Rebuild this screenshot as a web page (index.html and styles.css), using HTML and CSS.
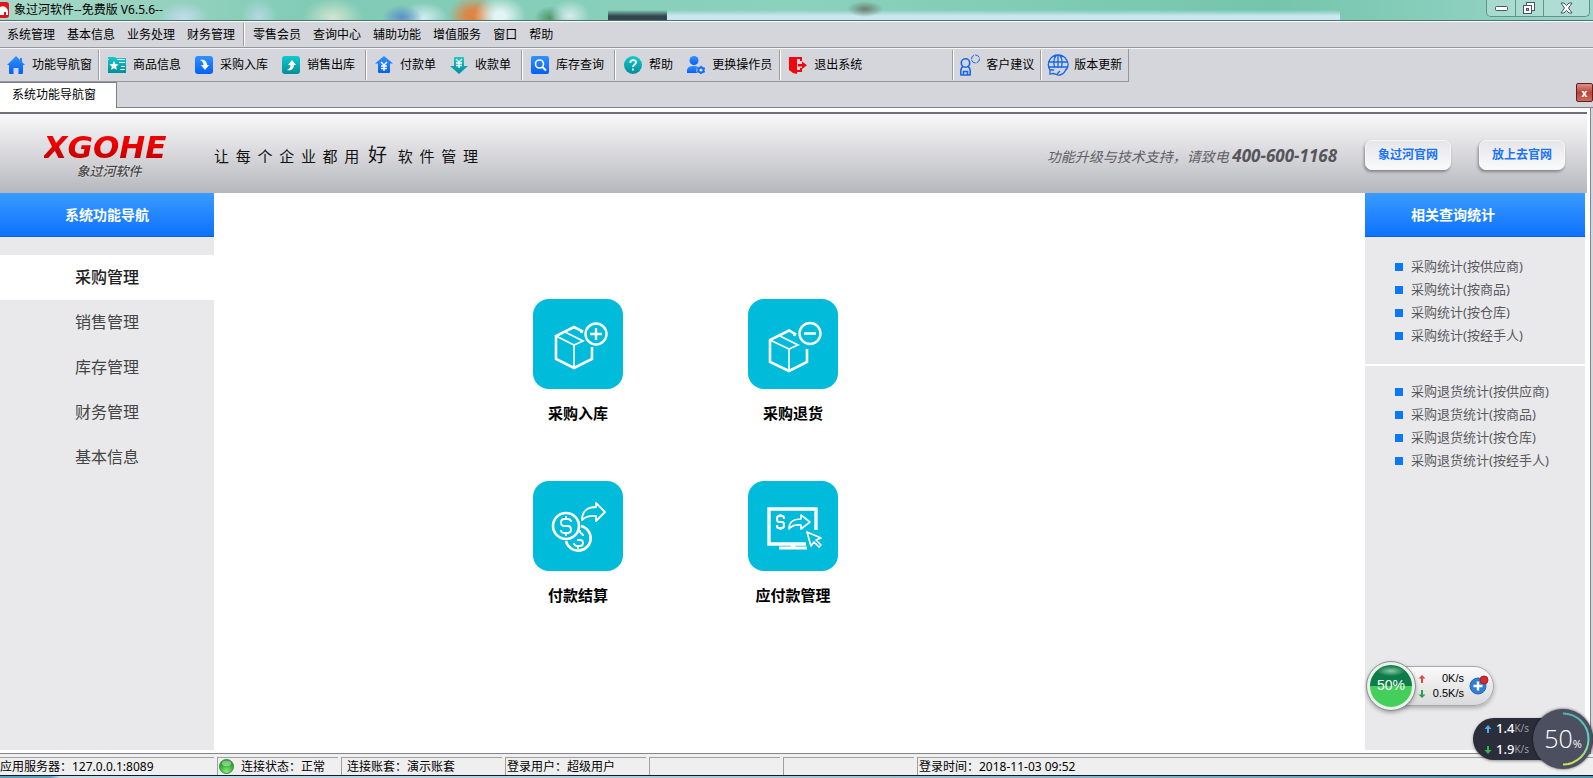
FILE: index.html
```html
<!DOCTYPE html>
<html lang="zh-CN">
<head>
<meta charset="utf-8">
<title>象过河软件--免费版 V6.5.6--</title>
<link rel="stylesheet" href="styles.css">
</head>
<body>
<svg class="defs" aria-hidden="true">
  <defs>
    <linearGradient id="blue" x1="0" y1="0" x2="0" y2="1"><stop offset="0" stop-color="#3291ff"/><stop offset="1" stop-color="#0560f5"/></linearGradient>
    <linearGradient id="teal" x1="0" y1="0" x2="0" y2="1"><stop offset="0" stop-color="#12c9cd"/><stop offset="1" stop-color="#028e98"/></linearGradient>
    <linearGradient id="arc" x1="0" y1="0" x2="0" y2="1"><stop offset="0" stop-color="#4cb5b0"/><stop offset=".5" stop-color="#62d8c0"/><stop offset="1" stop-color="#d8e055"/></linearGradient>
    <radialGradient id="ball" cx=".5" cy=".85" r=".8"><stop offset="0" stop-color="#8be878"/><stop offset=".6" stop-color="#35b535"/><stop offset="1" stop-color="#1e8a2a"/></radialGradient>
  </defs>
</svg>

<header class="titlebar">
  <svg class="app-icon" viewBox="0 0 9 16"><path d="M0 0h6q3 0 3 3v10q0 3-3 3H0z" fill="#e5121a"/><path d="M0 5c4-2 8 1 8 5v3H6v-3H4v3H0z" fill="#fff"/></svg>
  <h1 class="title">象过河软件--免费版 V6.5.6--</h1>
  <div class="window-buttons">
    <button class="win" aria-label="最小化"><svg width="13" height="5"><rect x=".5" y=".5" width="12" height="4" rx="1" fill="#fff" stroke="#4d5560"/></svg></button>
    <button class="win" aria-label="还原"><svg width="13" height="13"><rect x="3.500" y=".5" width="8" height="8" fill="#fff" stroke="#4d5560"/><rect x=".5" y="3.500" width="8" height="8" fill="#fff" stroke="#4d5560"/><rect x="3.500" y="6.500" width="2" height="2" fill="#9bd" stroke="#4d5560"/></svg></button>
    <button class="win win-close" aria-label="关闭"><svg width="13" height="12"><path d="M1 1h3l2.500 2.600L9 1h3L8.500 6l3.500 5H9L6.500 8.400 4 11H1l3.500-5z" fill="#fff" stroke="#4d5560"/></svg></button>
  </div>
</header>

<nav class="menubar">
  <div class="menu-group">
    <button>系统管理</button><button>基本信息</button><button>业务处理</button><button>财务管理</button>
  </div>
  <div class="menu-group">
    <button>零售会员</button><button>查询中心</button><button>辅助功能</button><button>增值服务</button><button>窗口</button><button>帮助</button>
  </div>
</nav>

<div class="toolbar-row">
<div class="toolbar">
  <div class="tools tools-home">
    <button><svg viewBox="0 0 18 18"><path d="M9 0L0 9h2v8q0 1 1 1h3.500v-6h5v6H15q1 0 1-1V9h2l-3-3V2h-2v2z" fill="url(#blue)"/></svg>功能导航窗</button>
  </div>
  <div class="tools">
    <button><svg viewBox="0 0 18 18"><path d="M0 1h7l1 1h10v15H0z" fill="url(#teal)"/><path d="M6 5l1.400 3 3.100.4-2.300 2.100.7 3.200L6 12.200l-2.900 1.500.7-3.200-2.300-2.100 3.100-.4zM11 6h6v1h-6zM13 10h4v1h-4zM12 13h5v1h-5zM0 3h1v1H0zM9 3h8v1H9z" fill="#fff"/></svg>商品信息</button>
    <button><svg viewBox="0 0 18 18"><rect width="18" height="18" rx="3" fill="url(#blue)"/><path d="M5 4c4-1 7 1 7 5h2l-4 5-4-5h2.500c0-2-1-4-3.500-5z" fill="#fff"/></svg>采购入库</button>
    <button><svg viewBox="0 0 18 18"><rect width="18" height="18" rx="3" fill="url(#teal)"/><path d="M5 14c4 1 7-1 7-5h2l-4-5-4 5h2.500c0 2-1 4-3.500 5z" fill="#fff"/></svg>销售出库</button>
  </div>
  <div class="tools">
    <button><svg viewBox="0 0 18 18"><path d="M9 0l9 7.500h-3V16q0 1-1 1H4q-1 0-1-1V7.500H0z" fill="url(#blue)"/><path d="M6 6l3 3 3-3M9 9v6M6 10h6M6 12.500h6" fill="none" stroke="#fff" stroke-width="1.400"/></svg>付款单</button>
    <button><svg viewBox="0 0 18 18"><path d="M9 18l9-8h-4V2q0-1-1-1H5Q4 1 4 2v8H0z" fill="url(#teal)"/><path d="M6 3l3 3 3-3M9 6v6M6 7h6M6 9.500h6" fill="none" stroke="#fff" stroke-width="1.400"/></svg>收款单</button>
  </div>
  <div class="tools">
    <button><svg viewBox="0 0 18 18"><rect width="18" height="18" rx="2" fill="url(#blue)"/><circle cx="8.500" cy="8" r="4" fill="none" stroke="#fff" stroke-width="1.600"/><path d="M11.500 11l3.500 3.500" stroke="#fff" stroke-width="2"/></svg>库存查询</button>
  </div>
  <div class="tools tools-user">
    <button><svg viewBox="0 0 18 18"><circle cx="9" cy="9" r="9" fill="url(#teal)"/><path d="M6.300 7c0-4 5.700-3.500 5.700-.5C12 8.500 9 8.500 9 11M9 12.500v2" fill="none" stroke="#fff" stroke-width="1.800"/></svg>帮助</button>
    <button><svg viewBox="0 0 18 18"><circle cx="7" cy="4.500" r="4.500" fill="url(#blue)"/><path d="M0 17v-2c0-4 3-5 7-5 2 0 3 .3 4 1-2 1-2 4-1 6z" fill="url(#blue)"/><circle cx="14" cy="14" r="2.600" fill="#d5e4fa" stroke="#126cf7" stroke-width="2"/><path d="M14 9.800v1M14 17v1M10.200 12l1 .5M17 15.500l.8.500M10.200 16l1-.5M17 12.500l.8-.5" stroke="#126cf7" stroke-width="1.500"/></svg>更换操作员</button>
  </div>
  <div class="tools tools-exit">
    <button><svg viewBox="0 0 18 18"><path d="M0 1h13v4h-2V3H8v11h3v-2h2v4H8v2l-4-1-4-3z" fill="#f5060c"/><path d="M9 8h4V5.500l5 3.700-5 3.700v-2.400H9z" fill="#f5060c"/></svg>退出系统</button>
  </div>
  <div class="tools tools-wide">
    <button><svg viewBox="0 0 22 22"><g fill="none" stroke="#1766e8" stroke-width="1.600"><circle cx="6.500" cy="9" r="4.200"/><path d="M4 12.500C1.500 14 1.500 18 2 21h9c.5-3 .5-7-2-8.500M4.500 21v-3.500h4V21"/></g><circle cx="16.500" cy="5" r="4" fill="none" stroke="#1766e8" stroke-dasharray="5 1"/></svg>客户建议</button>
  </div>
  <div class="tools tools-wide">
    <button><svg viewBox="0 0 22 22"><g fill="none" stroke="#1766e8" stroke-width="1.300"><path d="M3 16C-1 10 3 1 11 1s13 9 8 15M1 8h20M1 13h20M8 14C6 9 7 4 9.500 1M14 14c2-5 1-10-1.500-13M11 1v13M3 21v-5h4M4 20c3-2 5 2 9 1s5-3 6-6M13 17l-3 3"/></g></svg>版本更新</button>
  </div>
</div>
</div>

<div class="tabs" role="tablist">
  <button class="tab" role="tab" aria-selected="true">系统功能导航窗</button>
  <button class="tab-close" aria-label="关闭标签">x</button>
</div>

<div class="frame">
  <section class="banner">
    <div class="logo">
      <strong class="logo-name">XGOHE</strong>
      <span class="logo-sub">象过河软件</span>
    </div>
    <p class="slogan">让  每  个  企  业  都  用  <big>好</big>  软  件  管  理</p>
    <p class="support">功能升级与技术支持，请致电 <b>400-600-1168</b></p>
    <a class="site" href="#">象过河官网</a>
    <a class="site" href="#">放上去官网</a>
  </section>

  <div class="workspace">
    <nav class="side">
      <h2 class="panel-title">系统功能导航</h2>
      <a class="side-link active" href="#">采购管理</a>
      <a class="side-link" href="#">销售管理</a>
      <a class="side-link" href="#">库存管理</a>
      <a class="side-link" href="#">财务管理</a>
      <a class="side-link" href="#">基本信息</a>
    </nav>

    <main class="tiles">
      <a class="tile" href="#">
        <svg viewBox="0 0 90 90" fill="none" stroke="#fff"><path d="M48 34l1-2-8-4-18 9v23l18 9 18-9V48" stroke-width="2.600"/><path d="M23 37l18 9 9-4-18-9M41 46v22" stroke-width="1.700"/><circle cx="63" cy="35" r="10.500" stroke-width="2.400"/><path d="M57 35h12M63 29v12" stroke-width="2.400"/></svg>
        采购入库</a>
      <a class="tile" href="#">
        <svg viewBox="0 0 90 90" fill="none" stroke="#fff"><path d="M46 37l1-2-6-3.500L22 41v22l19 9 18-9V50" stroke-width="2.600"/><path d="M22 41l19 9 9-4-18-9M41 50v22" stroke-width="1.700"/><circle cx="62" cy="34.500" r="10.500" stroke-width="2.400"/><path d="M56 34.500h12" stroke-width="2.400"/></svg>
        采购退货</a>
      <a class="tile" href="#">
        <svg viewBox="0 0 90 90" fill="none" stroke="#fff"><circle cx="33" cy="45" r="13" stroke-width="2.600"/><path d="M48 45a12.500 12.500 0 1 1-15 15" stroke-width="2.600"/><path d="M38 41v-1q-1-2-3-2h-4q-3 0-3 3.500t3 3.500h4q3 0 3 3.500t-3 3.500h-4q-2 0-3-2v-1M33 35v3M33 52v3M50 55v-1q-1-2-3-2M41 62v1q1 2 3 2h3q3 0 3-3t-3-3h-3M45 65v3M47 49v3" stroke-width="1.800"/><path d="M49 39c0-8 5-13 14-13v-4l9 9-9 9v-5c-6-.5-10 0-14 4z" stroke-width="1.800" stroke-linejoin="round"/></svg>
        付款结算</a>
      <a class="tile" href="#">
        <svg viewBox="0 0 90 90" fill="none" stroke="#fff"><path d="M68 49V28H21v35h37" stroke-width="3.400"/><path d="M31 67h28" stroke-width="3"/><path d="M45 63v4" stroke-width="5"/><path d="M36 38v-1q0-2-2-2h-3q-2 0-2 3t2 3h3q2 0 2 3t-2 3h-3q-2 0-2-2v-1M32.500 33v2M32.500 47v2" stroke-width="2.200"/><path d="M41 48c0-7 5-10 12-10v-4l9 7-9 7v-4c-5-.5-9 0-12 4z" stroke-width="1.600" stroke-linejoin="round"/><path d="M59 51l4 14 3-4 5 5 2-2-5-5 5-2z" stroke-width="1.700" stroke-linejoin="round"/></svg>
        应付款管理</a>
    </main>

    <aside class="stats">
      <h2 class="panel-title">相关查询统计</h2>
      <ul>
        <li><a href="#">采购统计(按供应商)</a></li>
        <li><a href="#">采购统计(按商品)</a></li>
        <li><a href="#">采购统计(按仓库)</a></li>
        <li><a href="#">采购统计(按经手人)</a></li>
      </ul>
      <ul>
        <li><a href="#">采购退货统计(按供应商)</a></li>
        <li><a href="#">采购退货统计(按商品)</a></li>
        <li><a href="#">采购退货统计(按仓库)</a></li>
        <li><a href="#">采购退货统计(按经手人)</a></li>
      </ul>
    </aside>
  </div>
</div>

<footer class="status">
  <span class="cell cell-server">应用服务器：127.0.0.1:8089</span>
  <span class="cell cell-link"><svg viewBox="0 0 16 16"><circle cx="8" cy="8" r="7.500" fill="url(#ball)" stroke="#3b8d3d"/><ellipse cx="8" cy="4.500" rx="5" ry="3" fill="#fff" opacity=".4"/></svg>连接状态：正常</span>
  <span class="cell cell-book">连接账套：演示账套</span>
  <span class="cell cell-user">登录用户：超级用户</span>
  <span class="cell cell-blank"></span>
  <span class="cell cell-blank"></span>
  <span class="cell cell-time">登录时间：2018-11-03 09:52</span>
</footer>
<div class="desktop-edge"></div>

<div class="meter meter-light">
  <div class="orb">50%</div>
  <div class="speeds">
    <span><svg class="arrow" viewBox="0 0 8 8"><path d="M4 0l3.500 3.500H5V8H3V3.500H.5z" fill="#dc4a3d"/></svg>0K/s</span>
    <span><svg class="arrow" viewBox="0 0 8 8"><path d="M4 8l3.500-3.500H5V0H3v4.500H.5z" fill="#2a9f50"/></svg>0.5K/s</span>
  </div>
  <svg class="boost" viewBox="0 0 20 20"><circle cx="9" cy="11" r="8" fill="#2f7fd8" stroke="#2767b5"/><path d="M9 6.500v9M4.500 11h9" stroke="#fff" stroke-width="2.400"/><circle cx="15" cy="5" r="4" fill="#d9292c" stroke="#a52023"/></svg>
</div>

<div class="meter meter-dark">
  <div class="speeds">
    <span><svg class="arrow" viewBox="0 0 8 8"><path d="M4 0l3.500 4H5v4H3V4H.5z" fill="#4fa9e8"/></svg>1.4<small>K/s</small></span>
    <span><svg class="arrow" viewBox="0 0 8 8"><path d="M4 8L.5 4H3V0h2v4h2.500z" fill="#35b34a"/></svg>1.9<small>K/s</small></span>
  </div>
  <div class="dial">50<small>%</small><svg class="dial-arc" viewBox="0 0 60 60"><path d="M30 4.500a25.500 25.500 0 0 1 0 51" fill="none" stroke="url(#arc)" stroke-width="2"/></svg></div>
</div>
</body>
</html>
```
FILE: styles.css
```css
* { box-sizing: border-box; }
body {
  margin: 0;
  min-height: 100vh;
  display: flex;
  flex-direction: column;
  position: relative;
  background: #d5d6dc;
  color: #000;
  font: 12px/16px "Noto Sans", "Noto Sans CJK SC", sans-serif;
}
h1, h2, p, ul { margin: 0; padding: 0; font: inherit; }
ul { list-style: none; }
a { color: inherit; text-decoration: none; }
button { margin: 0; padding: 0; border: 0; background: none; color: inherit; font: inherit; }
svg { flex: none; }
.defs { position: absolute; width: 0; height: 0; }

/* title bar */
.titlebar {
  display: flex;
  align-items: flex-start;
  height: 22px;
  border-bottom: 1px solid #fff;
  box-shadow: inset 0 -1px #43736e;
  background:
    radial-gradient(ellipse 26px 16px at 184px 18px, #c4dcf0, transparent),
    radial-gradient(ellipse 18px 20px at 259px 18px, #b5d9e4, transparent),
    radial-gradient(ellipse 30px 20px at 333px 18px, #d5e5d2, transparent),
    radial-gradient(ellipse 20px 12px at 402px 17px, #5d8fc9, transparent),
    radial-gradient(ellipse 24px 16px at 424px 18px, #d4ecf4, transparent),
    radial-gradient(ellipse 26px 20px at 500px 16px, #e4f4f6 20%, transparent),
    radial-gradient(ellipse 26px 20px at 474px 16px, #dd8545 30%, transparent),
    radial-gradient(ellipse 20px 16px at 570px 16px, #d5ecee, transparent),
    radial-gradient(ellipse 16px 12px at 550px 18px, #4f9468, transparent),
    radial-gradient(ellipse 18px 8px at 865px 9px, #6f8074, transparent),
    linear-gradient(transparent 10px, #33454f 16px) 608px 0 / 59px 22px no-repeat,
    linear-gradient(transparent 10px, #cde7f1 16px) 667px 0 / 673px 22px no-repeat,
    linear-gradient(90deg, #a9d9c8, #80cbb5 20%, #8bd2bd 50%, #74c5ab 80%, #9cd6cc);
}
.app-icon { width: 9px; height: 16px; margin-top: 2px; }
.title { margin: 2px 0 0 5px; }
.window-buttons {
  display: flex;
  margin: 0 3px 0 auto;
  height: 17px;
  border: 1px solid #5f9489;
  border-top: 0;
  border-radius: 0 0 5px 5px;
  background: #ffffff38;
}
.win { display: flex; align-items: center; justify-content: center; width: 28px; }
.win + .win { border-left: 1px solid #5f9489; }
.win-close { width: 46px; }

/* menu */
.menubar { display: flex; height: 26px; border-bottom: 1px solid #96979e; }
.menu-group { display: flex; gap: 12px; padding: 0 8px 0 7px; margin: 1px 0; }
.menu-group + .menu-group { border-left: 1px solid #9a9aa0; box-shadow: inset 1px 0 #fff; padding-left: 9px; }

/* toolbar */
.toolbar-row { display: flex; border-top: 1px solid #f5f5f8; }
.toolbar { display: flex; height: 33px; border: solid #96979e; border-width: 0 1px 1px 0; }
.tools { display: flex; align-items: center; gap: 14px; padding: 0 10px 0 9px; margin: 1px 0; }
.tools-home { padding: 0 6px 0 7px; }
.tools + .tools { border-left: 1px solid #9a9aa0; box-shadow: inset 1px 0 #fff; }
.tools button { display: flex; align-items: center; gap: 7px; }
.tools svg { width: 18px; height: 18px; }
.tools-user { padding-right: 7px; }
.tools-exit { padding-right: 90px; }
.tools-wide { padding: 0 6px; }
.tools-wide button { gap: 5px; }
.tools-wide svg { width: 22px; height: 22px; }

/* tabs */
.tabs { display: flex; justify-content: space-between; align-items: flex-start; height: 26px; border-bottom: 1px solid #7f8087; }
.tab { width: 117px; height: 26px; padding: 0 20px 2px 12px; background: #fff; border: solid #7f8087; border-width: 1px 1px 0 0; text-align: left; }
.tab-close {
  width: 17px;
  height: 19px;
  margin: 1px 0 0;
  border: 1px solid #5b2024;
  border-radius: 2px;
  background: linear-gradient(#dc9188, #b54437 50%, #cf6b5a);
  color: #fff;
  font-size: 10px;
  font-weight: 700;
  line-height: 14px;
}

/* document frame */
.frame {
  flex: 1;
  display: flex;
  flex-direction: column;
  margin-right: 2px;
  padding: 4px 3px 3px 0;
  border-right: 1px solid #85868c;
  border-bottom: 1px solid #85868c;
  background: #fff;
}
.banner {
  display: flex;
  align-items: center;
  height: 81px;
  padding: 0 22px 0 40px;
  border-top: 2px solid #707075;
  background: linear-gradient(#f8f8f8, #dcdce0 45%, #b6b7bc);
}
.logo { display: flex; flex-direction: column; align-items: center; width: 130px; padding-top: 2px; }
.logo-name {
  font: italic 700 31px/32px "DejaVu Sans", sans-serif;
  background: linear-gradient(#f00000 35%, #b80000);
  -webkit-background-clip: text;
  background-clip: text;
  color: transparent;
}
.logo-sub { padding-left: 8px; font-size: 13px; font-style: italic; font-weight: 500; color: #444; text-shadow: 0 0 2px #fff; }
.slogan {
  margin-left: 44px;
  padding-top: 3px;
  font: 15px/24px "Noto Sans CJK SC", sans-serif;
  color: #111;
  white-space: pre;
}
.slogan big { margin: 0 4px 0 2px; font-size: 19px; }
.support { margin-left: auto; padding-top: 5px; font-size: 14px; line-height: 20px; font-style: italic; color: #606066; white-space: nowrap; }
.support b { font-size: 17px; color: #55555a; }
.site {
  width: 86px;
  height: 30px;
  margin: 2px 0 0 28px;
  border: 1px solid #f6f6f8;
  border-radius: 7px;
  background: linear-gradient(#e6e6e8, #fafafb);
  box-shadow: -1px 2px 3px #85858c;
  color: #1b74f8;
  font-weight: 700;
  line-height: 28px;
  text-align: center;
}

.workspace { flex: 1; display: flex; }
.panel-title {
  height: 44px;
  border-bottom: 1px solid #1560c8;
  background: linear-gradient(#3a9bff, #0d72ff);
  color: #fff;
  font-size: 14px;
  font-weight: 700;
  line-height: 44px;
}
.side { width: 214px; background: #e9e9eb; text-align: center; }
.side .panel-title { margin-bottom: 18px; }
.side-link { display: block; font-size: 16px; line-height: 45px; color: #444; }
.side-link.active { background: #fff; color: #222; font-weight: 500; }
.tiles {
  flex: 1;
  display: grid;
  grid-template-columns: 90px 90px;
  grid-auto-rows: 124px;
  gap: 58px 125px;
  padding: 106px 0 0 319px;
}
.tile { display: flex; flex-direction: column; align-items: center; gap: 14px; font-size: 15px; line-height: 20px; font-weight: 700; white-space: nowrap; }
.tile svg { width: 90px; height: 90px; border-radius: 16px; background: #00bbda; }
.stats { width: 220px; margin-right: 2px; background: #e9e9eb; }
.stats .panel-title { padding-left: 46px; }
.stats ul { padding: 18px 0 17px 30px; font-size: 13px; line-height: 23px; color: #5a5a5e; }
.stats ul + ul { border-top: 2px solid #fff; padding-top: 14px; }
.stats li { display: flex; align-items: center; gap: 8px; }
.stats li::before { content: ""; width: 8px; height: 8px; background: #0878f5; }

/* status bar */
.status { display: flex; gap: 3px; padding-top: 3px; height: 21px; background: #efefef; white-space: nowrap; }
.cell { display: flex; align-items: center; height: 18px; border: solid #a0a0a0; border-width: 1px 0 0 1px; }
.cell-server { width: 214px; border-left: 0; }
.cell-link { width: 121px; gap: 7px; padding-left: 1px; }
.cell-link svg { width: 15px; height: 15px; }
.cell-book { width: 161px; padding-left: 5px; }
.cell-user { width: 141px; padding-left: 1px; }
.cell-blank { width: 131px; }
.cell-time { flex: 1; padding-left: 1px; }
.desktop-edge { height: 3px; border-top: 1px solid #06202e; background: linear-gradient(90deg, #5e9fc0 50px, #c4dce6 60px, #a8c6d3 50%, #4f94b0); }

/* floating network meters */
.meter { position: absolute; display: flex; align-items: center; }
.meter .speeds { display: flex; flex-direction: column; }
.meter .speeds span { display: flex; align-items: center; justify-content: space-between; }
.arrow { width: 8px; height: 8px; }
.meter-light {
  right: 99px;
  bottom: 72px;
  width: 108px;
  height: 40px;
  border: 1px solid #a8a8aa;
  border-radius: 20px;
  background: linear-gradient(#fafafa, #dadadc);
  box-shadow: 0 2px 4px #0004;
}
.orb {
  flex: none;
  width: 48px;
  height: 48px;
  margin-left: -20px;
  border: 3px solid #e8f2ea;
  border-radius: 50%;
  outline: 1px solid #8a958d;
  background: radial-gradient(ellipse 14px 5px at 50% 6px, #8fc8a8, transparent), linear-gradient(#0d7d48 50%, #44cf5b 51%);
  box-shadow: 0 2px 5px #0006;
  color: #fff;
  font: 14px/40px "Liberation Sans", sans-serif;
  text-align: center;
}
.meter-light .speeds { width: 46px; margin-left: 3px; font: 11px/15px "Liberation Sans", sans-serif; }
.boost { width: 20px; height: 20px; margin: 0 0 2px 5px; }
.meter-dark {
  right: 0;
  bottom: 18px;
  width: 120px;
  height: 42px;
  padding-left: 11px;
  border-radius: 21px;
  background: #2b2e3a;
  color: #fff;
  box-shadow: 0 1px 3px #0006;
}
.meter-dark .speeds { font-size: 13px; font-weight: 500; line-height: 21px; }
.meter-dark .speeds .arrow { margin-right: 4px; }
.meter-dark .speeds small { color: #999ca5; font-size: 10px; font-weight: 400; }
.dial {
  position: absolute;
  right: 0;
  display: flex;
  align-items: baseline;
  justify-content: center;
  width: 60px;
  height: 60px;
  border-radius: 50%;
  background: #4c4f5f;
  box-shadow: 0 0 3px #000a;
  font: 300 25px/58px "Open Sans", sans-serif;
}
.dial small { font-size: 11px; font-weight: 400; }
.dial-arc { position: absolute; left: 0; top: 0; width: 60px; height: 60px; }
```
